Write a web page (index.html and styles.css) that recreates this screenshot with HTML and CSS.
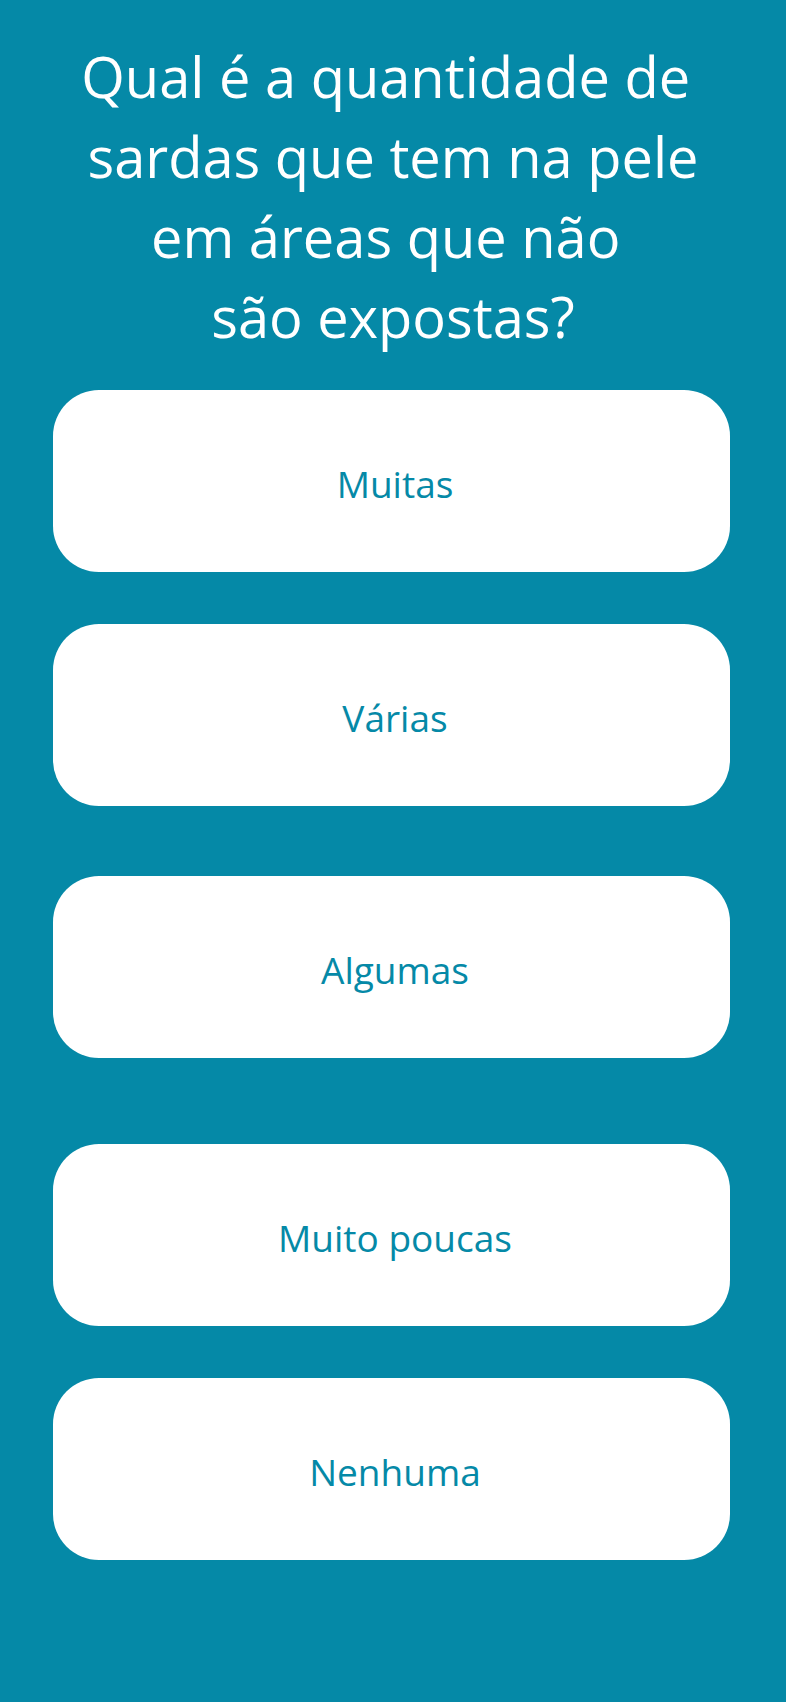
FILE: index.html
```html
<!DOCTYPE html>
<html lang="pt">
<head>
<meta charset="utf-8">
<title>Quiz</title>
<link rel="stylesheet" href="styles.css">
</head>
<body>
<main class="quiz">
  <h1 class="question">Qual é a quantidade de <br>sardas que tem na pele<br>em áreas que não <br>são expostas?</h1>
  <div class="options">
    <button class="option">Muitas</button>
    <button class="option gap-md">Várias</button>
    <button class="option gap-lg">Algumas</button>
    <button class="option gap-xl">Muito poucas</button>
    <button class="option gap-md">Nenhuma</button>
  </div>
</main>
</body>
</html>
```
FILE: styles.css
```css
html, body {
  margin: 0;
  padding: 0;
  background: #0589a7;
}
body {
  font-family: "Open Sans", "Noto Sans", sans-serif;
  min-height: 1702px;
}
.quiz {
  display: flex;
  flex-direction: column;
  align-items: center;
  padding-top: 36px;
}
.question {
  margin: 0;
  color: #ffffff;
  font-weight: 400;
  font-size: 56px;
  line-height: 80px;
  text-align: center;
  white-space: pre-wrap;
}
.options {
  display: flex;
  flex-direction: column;
  width: 677px;
  margin-top: 34px;
  margin-left: -4px;
}
.option {
  height: 182px;
  border: none;
  border-radius: 46px;
  background: #ffffff;
  color: #0589a7;
  font-family: inherit;
  font-size: 37px;
  font-weight: 400;
  padding: 4px 0 0 8px;
  display: flex;
  align-items: center;
  justify-content: center;
  margin-top: 53px;
}
.option:first-child {
  margin-top: 0;
}
.option.gap-md { margin-top: 52px; }
.option.gap-lg { margin-top: 70px; }
.option.gap-xl { margin-top: 86px; }
```
